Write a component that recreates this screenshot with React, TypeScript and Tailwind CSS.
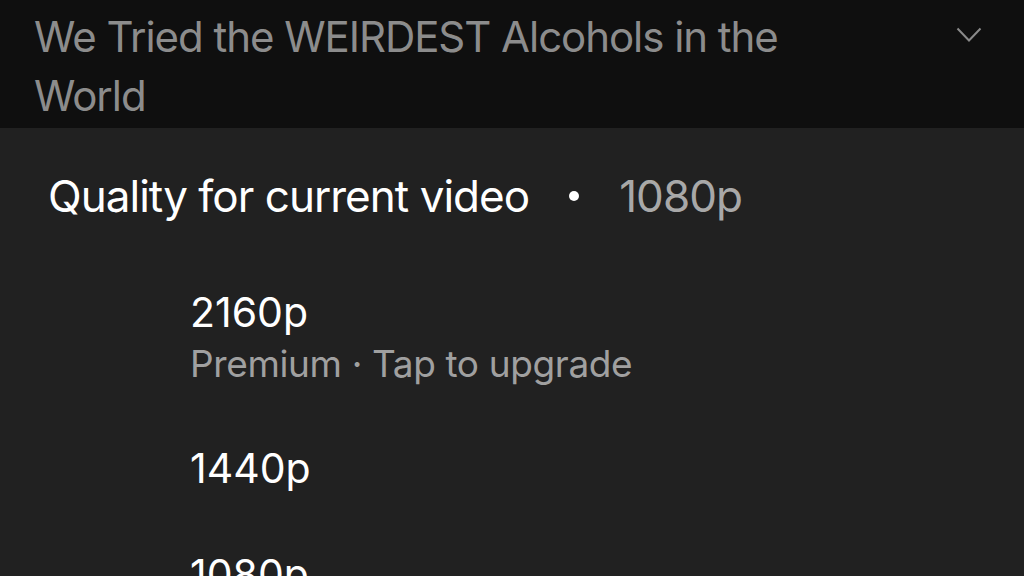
import React from 'react'

const options = [
  { label: '2160p', sub: 'Premium · Tap to upgrade' },
  { label: '1440p' },
  { label: '1080p' },
]

const App = (): React.JSX.Element => {
  return (
    <div className="h-[576px] w-[1024px] overflow-hidden bg-[#212121] font-['Inter',sans-serif]">
      <div className="flex h-[128px] items-start justify-between bg-[#0f0f0f] pl-[34px] pr-[42px]">
        <p className="w-[820px] pt-[7px] text-[42px] leading-[59px] tracking-[-0.025em] text-[#8c8c8c]">
          We Tried the WEIRDEST Alcohols in the World
        </p>
        <svg width="26" height="16" viewBox="0 0 26 16" className="mt-[27px]" fill="none">
          <path d="M1.5 1.5 L13 13.5 L24.5 1.5" stroke="#8a8a8a" strokeWidth="2" />
        </svg>
      </div>

      <div className="flex items-center pl-[48px] pt-[42px] text-[44px] leading-[52px] tracking-[-0.022em]">
        <span className="text-white">Quality for current video</span>
        <span className="mx-[40px] h-[10px] w-[10px] rounded-full bg-white" />
        <span className="text-[#a8a8a8]">1080p</span>
      </div>

      <div className="flex flex-col gap-[58px] pl-[190px] pt-[66px]">
        {options.map((o) => (
          <div key={o.label}>
            <p className="text-[41px] leading-[48px] text-white">{o.label}</p>
            {o.sub && (
              <p className="mt-[6px] text-[37px] leading-[44px] tracking-[-0.01em] text-[#a0a0a0]">
                {o.sub}
              </p>
            )}
          </div>
        ))}
      </div>
    </div>
  )
}

export default App
